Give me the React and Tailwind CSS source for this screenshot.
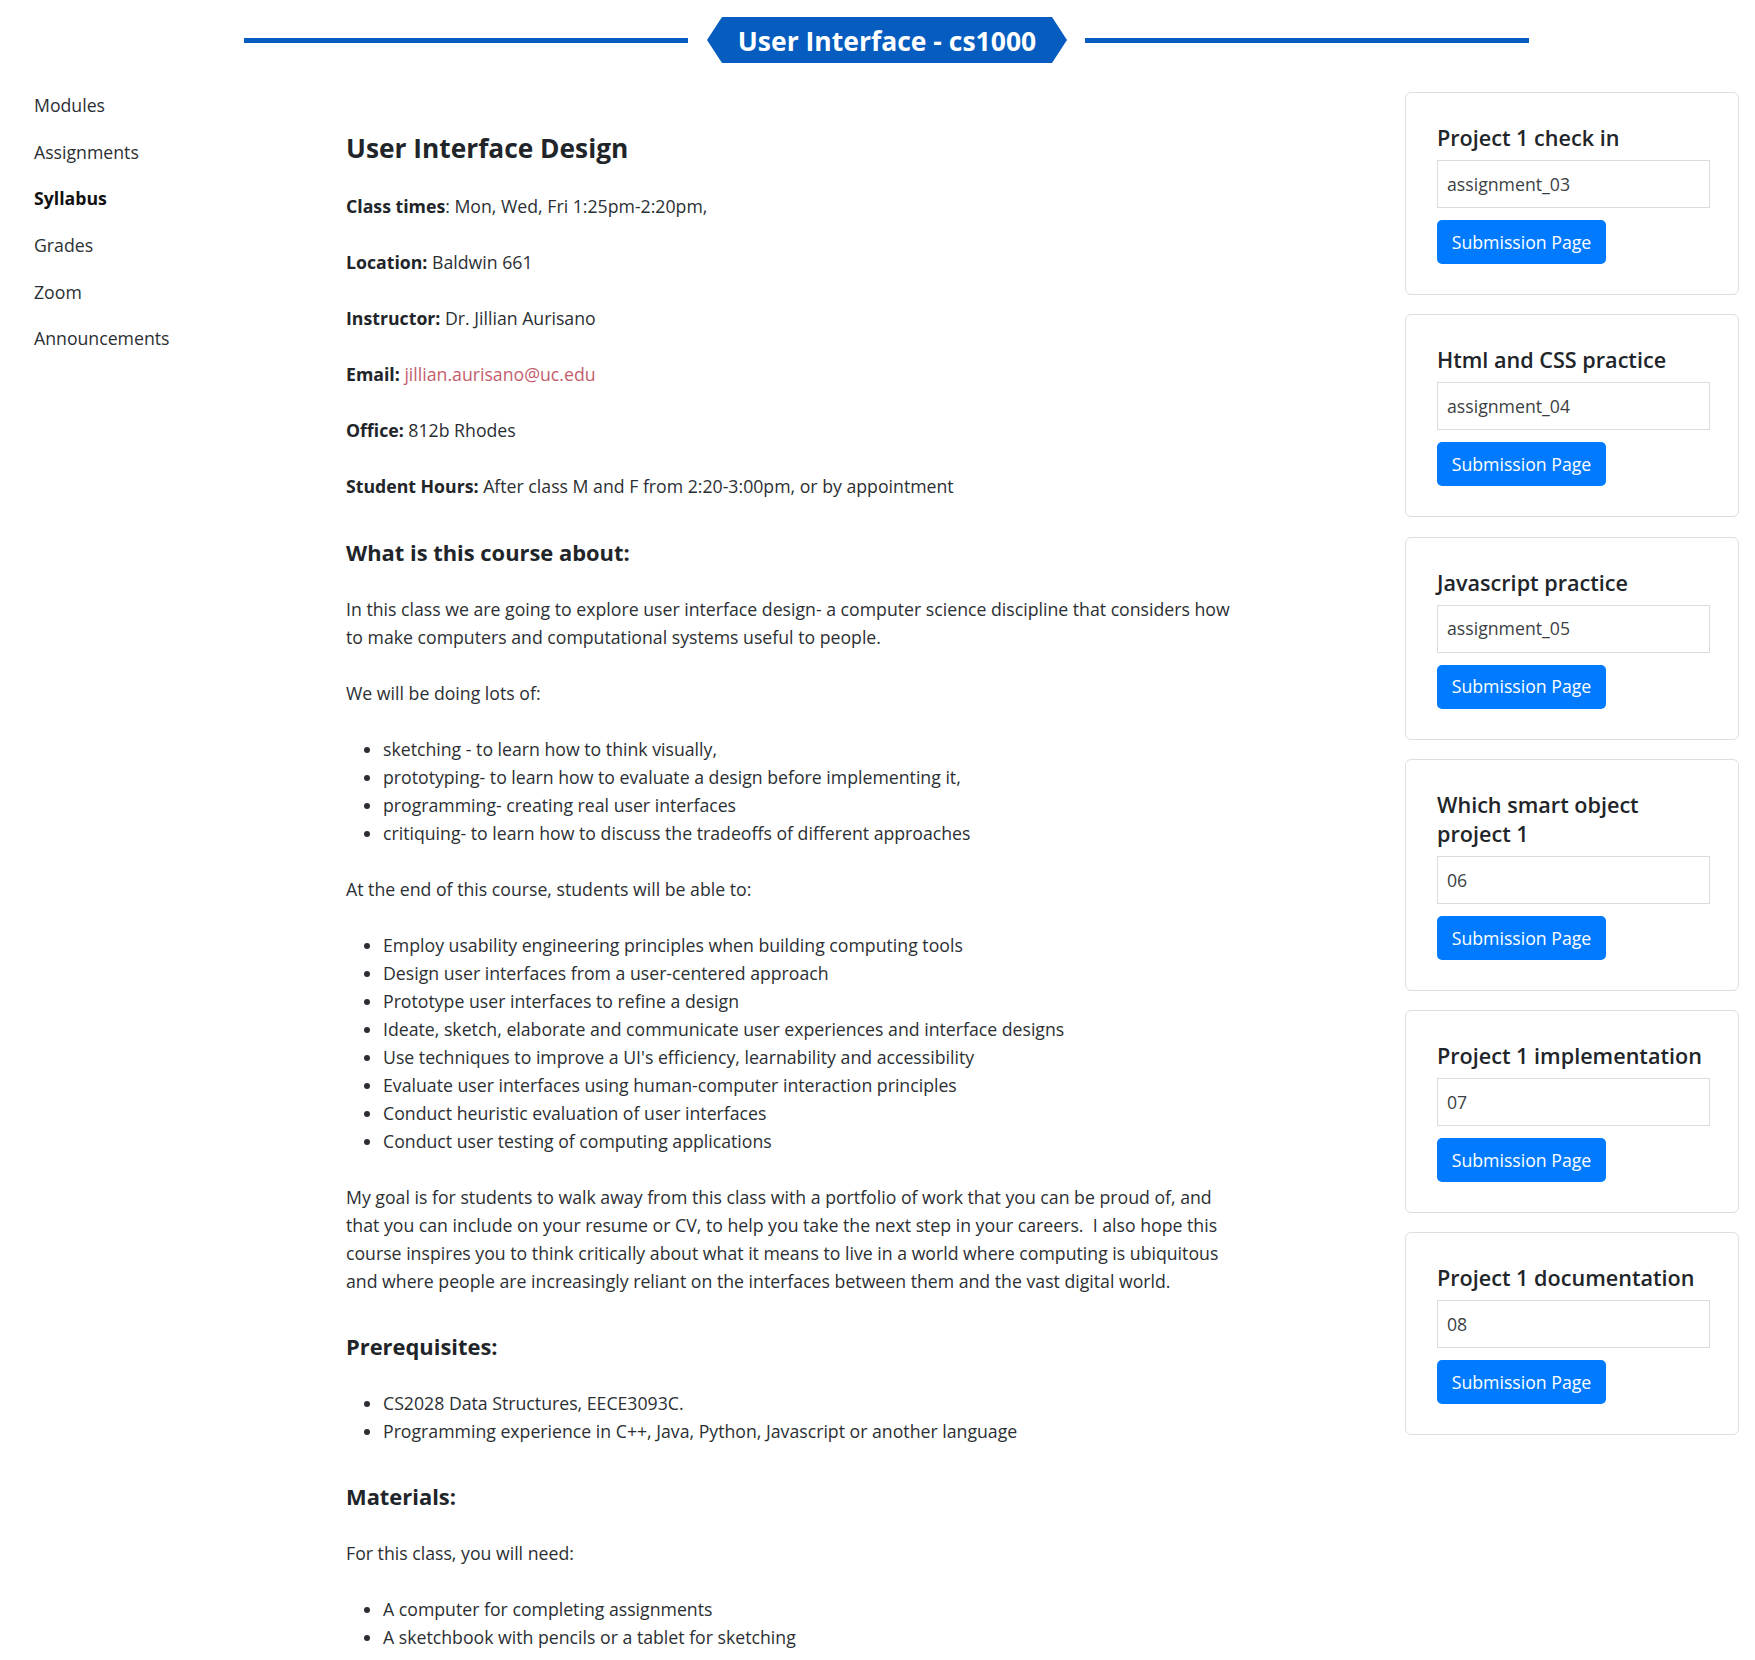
import React from "react";

const font = { fontFamily: '"Open Sans", "Noto Sans", sans-serif' };

const navItems = [
  { label: "Modules" },
  { label: "Assignments" },
  { label: "Syllabus", active: true },
  { label: "Grades" },
  { label: "Zoom" },
  { label: "Announcements" },
];

const cards = [
  { title: ["Project 1 check in"], value: "assignment_03" },
  { title: ["Html and CSS practice"], value: "assignment_04" },
  { title: ["Javascript practice"], value: "assignment_05" },
  { title: ["Which smart object", "project 1"], value: "06" },
  { title: ["Project 1 implementation"], value: "07" },
  { title: ["Project 1 documentation"], value: "08" },
];

function Card({ title, value }) {
  return (
    <div className="rounded-[6px] border border-[#dcdfe3] bg-white px-[31px] py-[30px]">
      <h4 className="whitespace-nowrap text-[21.6px] font-semibold leading-[29px] text-[#212529]">
        {title.map((t, i) => (
          <div key={i}>{t}</div>
        ))}
      </h4>
      <div className="mt-[8px] flex h-[48px] w-[273px] items-center border border-[#dcdcdc] bg-white px-[9px] text-[17.7px] text-[#3b3f44]">
        {value}
      </div>
      <button className="mt-[12px] flex h-[44px] w-[169px] items-center justify-center rounded-[5px] bg-[#007bff] text-[17.7px] text-white">
        Submission Page
      </button>
    </div>
  );
}

function Field({ label, children }) {
  return (
    <p className="mb-[28px]">
      <b className="font-bold text-[#212529]">{label}</b>
      {children}
    </p>
  );
}

export default function App() {
  return (
    <div className="min-h-[1660px] bg-white text-[#212529]" style={font}>
      {/* Header */}
      <div className="flex justify-center pl-[18px] pt-[17px]">
        <div className="flex items-center">
          <div className="h-[5px] w-[444px] bg-[#065dbf]" />
          <div className="ml-[19px] mr-[18px] flex h-[46px] w-[360px] items-center justify-center bg-[#065dbf] pt-[2px] [clip-path:polygon(15px_0,calc(100%-15px)_0,100%_50%,calc(100%-15px)_100%,15px_100%,0_50%)]">
            <span className="text-[26.5px] font-bold leading-none text-white">
              User Interface - cs1000
            </span>
          </div>
          <div className="h-[5px] w-[444px] bg-[#065dbf]" />
        </div>
      </div>

      {/* Body */}
      <div className="mt-[19px] flex">
        <nav className="w-[346px] shrink-0 pl-[34px]">
          {navItems.map((n) => (
            <div
              key={n.label}
              className={
                "text-[17.7px] leading-[46.67px] " +
                (n.active ? "font-bold text-[#111]" : "text-[#2b2f33]")
              }
            >
              {n.label}
            </div>
          ))}
        </nav>

        <main className="w-[1059px] shrink-0 pt-[51px]">
          <div className="w-[910px] text-[17.7px] leading-[28px] text-[#2b2f33]">
            <h1 className="mb-[29px] text-[26.3px] font-bold leading-[30px] text-[#212529]">
              User Interface Design
            </h1>
            <Field label="Class times">: Mon, Wed, Fri 1:25pm-2:20pm,</Field>
            <Field label="Location:"> Baldwin 661</Field>
            <Field label="Instructor:"> Dr. Jillian Aurisano</Field>
            <Field label="Email:">
              {" "}
              <a className="text-[#c35d6c]">jillian.aurisano@uc.edu</a>
            </Field>
            <Field label="Office:"> 812b Rhodes</Field>
            <Field label="Student Hours:">
              {" "}
              After class M and F from 2:20-3:00pm, or by appointment
            </Field>

            <h3 className="mb-[28px] mt-[39px] text-[21.9px] font-bold leading-[28px] text-[#212529]">
              What is this course about:
            </h3>
            <p className="mb-[28px]">
              In this class we are going to explore user interface design- a
              computer science discipline that considers how
              <br />
              to make computers and computational systems useful to people.
            </p>
            <p className="mb-[28px]">We will be doing lots of:</p>
            <ul className="mb-[28px] list-disc pl-[37px]">
              <li>sketching - to learn how to think visually,</li>
              <li>
                prototyping- to learn how to evaluate a design before
                implementing it,
              </li>
              <li>programming- creating real user interfaces</li>
              <li>
                critiquing- to learn how to discuss the tradeoffs of different
                approaches
              </li>
            </ul>
            <p className="mb-[28px]">
              At the end of this course, students will be able to:
            </p>
            <ul className="mb-[28px] list-disc pl-[37px]">
              <li>Employ usability engineering principles when building computing tools</li>
              <li>Design user interfaces from a user-centered approach</li>
              <li>Prototype user interfaces to refine a design</li>
              <li>Ideate, sketch, elaborate and communicate user experiences and interface designs</li>
              <li>Use techniques to improve a UI's efficiency, learnability and accessibility</li>
              <li>Evaluate user interfaces using human-computer interaction principles</li>
              <li>Conduct heuristic evaluation of user interfaces</li>
              <li>Conduct user testing of computing applications</li>
            </ul>
            <p className="mb-[28px]">
              My goal is for students to walk away from this class with a
              portfolio of work that you can be proud of, and
              <br />
              that you can include on your resume or CV, to help you take the
              next step in your careers.&nbsp; I also hope this
              <br />
              course inspires you to think critically about what it means to
              live in a world where computing is ubiquitous
              <br />
              and where people are increasingly reliant on the interfaces
              between them and the vast digital world.
            </p>

            <h3 className="mb-[28px] mt-[38px] text-[21.9px] font-bold leading-[28px] text-[#212529]">
              Prerequisites:
            </h3>
            <ul className="mb-[28px] list-disc pl-[37px]">
              <li>CS2028 Data Structures, EECE3093C.</li>
              <li>
                Programming experience in C++, Java, Python, Javascript or
                another language
              </li>
            </ul>

            <h3 className="mb-[28px] mt-[38px] text-[21.9px] font-bold leading-[28px] text-[#212529]">
              Materials:
            </h3>
            <p className="mb-[28px]">For this class, you will need:</p>
            <ul className="list-disc pl-[37px]">
              <li>A computer for completing assignments</li>
              <li>A sketchbook with pencils or a tablet for sketching</li>
            </ul>
          </div>
        </main>

        <aside className="mt-[10px] flex w-[334px] shrink-0 flex-col gap-[19.3px]">
          {cards.map((c) => (
            <Card key={c.value} title={c.title} value={c.value} />
          ))}
        </aside>
      </div>
    </div>
  );
}
